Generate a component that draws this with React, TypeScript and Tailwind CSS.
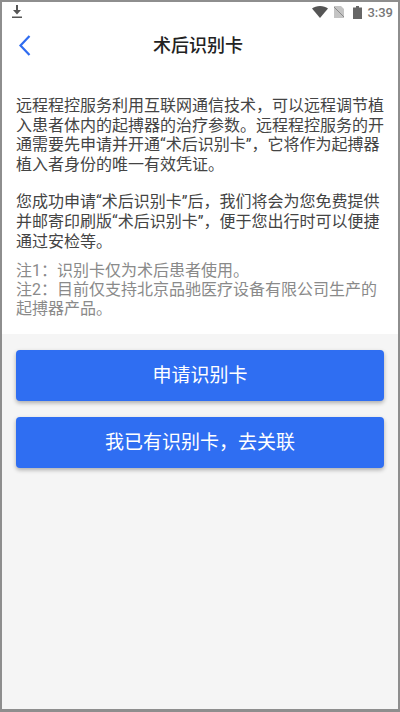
const font = "font-['Roboto','Noto_Sans_CJK_SC',sans-serif]";

function StatusBar() {
  return (
    <div className="flex h-[20px] items-center justify-between pl-[9px] pr-[5px]">
      <svg width="12" height="14" viewBox="0 0 12 14" fill="#555">
        <path d="M5 0h2v5h3L6 9.500 2 5h3zM1 11.500h10V13H1z" />
      </svg>
      <div className="flex items-center">
        <svg width="16" height="12" viewBox="0 0 16 12" fill="#555">
          <path d="M0 2.500C2 .9 4.800 0 8 0s6 .9 8 2.500L8 12z" />
        </svg>
        <svg className="ml-[6px]" width="10" height="12" viewBox="0 0 10 12">
          <path d="M0 0h7l3 3v9H0z" fill="#c4c4c4" />
          <path d="M0 1l10 10" stroke="#8a8a8a" strokeWidth="1" />
        </svg>
        <svg className="ml-[9px]" width="9" height="13" viewBox="0 0 9 13" fill="#666">
          <path d="M3 0h3v1.500h3V13H0V1.500h3z" />
        </svg>
        <span className="ml-[5px] text-[13px] font-medium leading-none text-[#777]">3:39</span>
      </div>
    </div>
  );
}

export default function App() {
  return (
    <div className={`${font} flex h-[712px] w-[400px] flex-col border-x-2 border-t-2 border-b-[3px] border-[#8e8e8e] bg-white`}>
      <StatusBar />
      <div className="relative flex h-[46px] items-center justify-center pr-[4px]">
        <svg className="absolute left-[15px] top-[11px]" width="16" height="24" viewBox="0 0 16 24" fill="none">
          <path d="M12.500 3 3.500 12.500 12.500 22" stroke="#2f6cf0" strokeWidth="2.200" />
        </svg>
        <h1 className="text-[18px] font-medium text-[#222]">术后识别卡</h1>
      </div>
      <div className="flex h-[266px] flex-col px-[14px] pt-[28px] text-[16px] leading-[19.600px] text-[#444]">
        <p>远程程控服务利用互联网通信技术，可以远程调节植入患者体内的起搏器的治疗参数。远程程控服务的开通需要先申请并开通“术后识别卡”，它将作为起搏器植入者身份的唯一有效凭证。</p>
        <p className="mt-[18px]">您成功申请“术后识别卡”后，我们将会为您免费提供并邮寄印刷版“术后识别卡”，便于您出行时可以便捷通过安检等。</p>
        <p className="mt-[10px] leading-[19px] text-[#8a8a8a]">
          注1：识别卡仅为术后患者使用。
          <br />
          注2：目前仅支持北京品驰医疗设备有限公司生产的起搏器产品。
        </p>
      </div>
      <div className="flex flex-1 flex-col gap-[16px] bg-[#f5f5f5] px-[14px] pt-[16px]">
        <button className="h-[51px] rounded-[4px] bg-[#2f6ef2] pt-[2px] text-[19px] text-white shadow-[0_2px_4px_rgba(0,0,0,0.3)]">申请识别卡</button>
        <button className="h-[51px] rounded-[4px] bg-[#2f6ef2] pt-[2px] text-[19px] text-white shadow-[0_2px_4px_rgba(0,0,0,0.3)]">我已有识别卡，去关联</button>
      </div>
    </div>
  );
}
